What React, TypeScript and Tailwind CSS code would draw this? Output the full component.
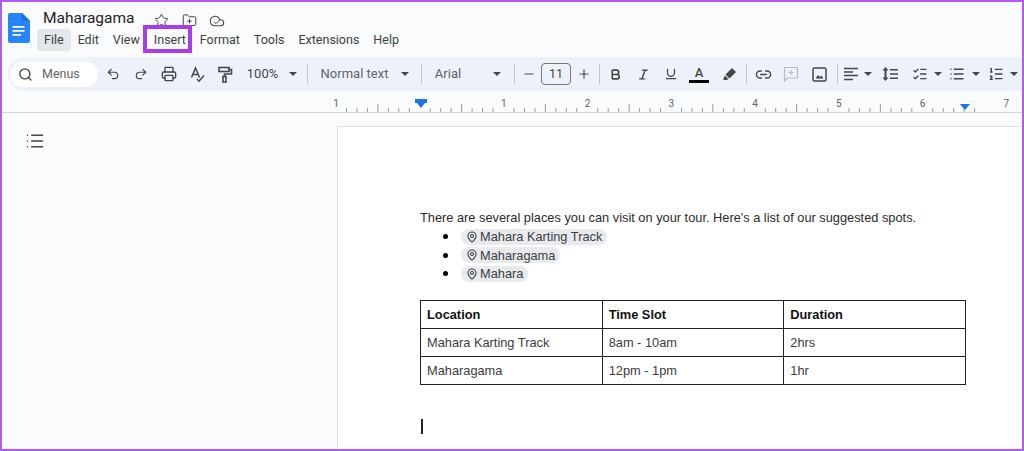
import { Bold, Cloud, Check, FolderPlus, Italic, Link2, List, ListChecks, ListOrdered, MapPin, Minus, Plus, Printer, Redo2, Search, Star, Underline, Undo2 } from 'lucide-react';

const menus = [
  { label: 'File', active: true },
  { label: 'Edit' },
  { label: 'View' },
  { label: 'Insert' },
  { label: 'Format' },
  { label: 'Tools' },
  { label: 'Extensions' },
  { label: 'Help' },
];

const rows = [
  ['Mahara Karting Track', '8am - 10am', '2hrs'],
  ['Maharagama', '12pm - 1pm', '1hr'],
];

const places = ['Mahara Karting Track', 'Maharagama', 'Mahara'];

const rulerLabels = [
  { n: 1, x: 334 },
  { n: 1, x: 501.75 },
  { n: 2, x: 585.5 },
  { n: 3, x: 669.25 },
  { n: 4, x: 753 },
  { n: 5, x: 836.75 },
  { n: 6, x: 920.5 },
  { n: 7, x: 1004.25 },
];

function Caret() {
  return <span className="h-0 w-0 border-x-[4px] border-t-[4px] border-x-transparent border-t-[#444746]" />;
}

function Sep() {
  return <span className="h-[20px] w-px shrink-0 bg-[#c7c7c7]" />;
}

function Slot({ className, children }: { className: string; children?: React.ReactNode }) {
  return <div className={`flex h-full shrink-0 items-center justify-center ${className}`}>{children}</div>;
}

function Ruler() {
  const eighth = 83.75 / 8;
  const ticks = Array.from({ length: 62 }, (_, i) => i);
  return (
    <svg width="1020" height="20" className="block">
      {ticks.map((i) => {
        const x = 334 + i * eighth;
        if (i % 8 === 0) return null;
        return <line key={i} x1={x} x2={x} y1={i % 4 === 0 ? 12 : 16} y2={20} stroke="#9a9c9e" strokeWidth="1" />;
      })}
      {rulerLabels.map((l) => (
        <text key={l.x} x={l.x} y="15" textAnchor="middle" fontSize="10" fontFamily="Roboto, sans-serif" fill="#5f6368">
          {l.n}
        </text>
      ))}
      <polygon points="413,7 425,7 425,11 423,11 419,16 415,11 413,11" fill="#1a73e8" />
      <polygon points="958,12 968,12 963,18" fill="#1a73e8" />
    </svg>
  );
}

function SpellIcon() {
  return (
    <svg width="17" height="17" viewBox="0 0 17 17" fill="none" stroke="#444746" strokeWidth="1.5">
      <path d="M2.5 11.5 6.5 2l4 9.5M4 8.5h5" />
      <path d="M8 13l2 2.2 5-5.7" />
    </svg>
  );
}

function PaintIcon() {
  return (
    <svg width="16" height="17" viewBox="0 0 16 17" fill="none" stroke="#444746" strokeWidth="1.6">
      <rect x="2" y="1.5" width="10" height="4" />
      <path d="M12 3.5h2.5v4.5H7.5v2.5" />
      <rect x="6" y="10.5" width="3" height="5.5" />
    </svg>
  );
}

function PenIcon() {
  return (
    <svg width="15" height="15" viewBox="0 0 15 15" fill="#444746">
      <path d="M10 1l4 4-6.5 6.5-4-4zM3 8.5l3.5 3.5-2 1H1.5v-1.5z" />
    </svg>
  );
}

function CommentIcon() {
  return (
    <svg width="16" height="16" viewBox="0 0 16 16" fill="none" stroke="#b8bbbf" strokeWidth="1.2">
      <path d="M1.5 1.5h13v10.5h-10l-3 3z" />
      <path d="M8 4v5M5.5 6.5h5" />
    </svg>
  );
}

function PictureIcon() {
  return (
    <svg width="15" height="15" viewBox="0 0 15 15" fill="none" stroke="#444746" strokeWidth="1.5">
      <rect x="1" y="1" width="13" height="13" rx="1.5" />
      <path d="M3.5 11.5l2.5-3.5 2 2 1.5-1.5 2 3z" fill="#444746" stroke="none" />
    </svg>
  );
}

function AlignIcon() {
  return (
    <svg width="14" height="14" viewBox="0 0 14 14" stroke="#444746" strokeWidth="1.5">
      <path d="M0 1.5h14M0 5h9M0 8.5h14M0 12.5h9" />
    </svg>
  );
}

function SpacingIcon() {
  return (
    <svg width="16" height="14" viewBox="0 0 16 14" fill="#444746">
      <path d="M3.5 0l3 3.5h-2v7h2l-3 3.5-3-3.5h2v-7h-2z" />
      <path d="M8 2h8v1.5H8zM8 6.2h8v1.5H8zM8 10.5h8V12H8z" />
    </svg>
  );
}

export default function App() {
  return (
    <div className="relative flex h-[451px] w-[1024px] flex-col overflow-hidden border-2 border-[#b05cf0] bg-[#f9fbfd] font-['Roboto',sans-serif] text-[#444746]">
      {/* Title + menus */}
      <div className="flex h-[55px] shrink-0">
        <svg width="22" height="30" viewBox="0 0 22 30" className="ml-[6px] mt-[11px] shrink-0">
          <path d="M2 0h12l8 8v20a2 2 0 0 1-2 2H2a2 2 0 0 1-2-2V2a2 2 0 0 1 2-2z" fill="#2684fc" />
          <path d="M14 0l8 8h-8z" fill="#1f6fe0" />
          <path d="M4.5 13h12v1.8h-12zM4.5 17h12v1.8h-12zM4.5 21h8.5v1.8H4.5z" fill="#fff" />
        </svg>
        <div className="ml-[7px] flex flex-col">
          <div className="flex h-[27px] items-end">
            <span className="mb-[1px] ml-[6px] text-[15.5px] leading-[20px] text-[#1f1f1f]">Maharagama</span>
            <Star className="mb-[1px] ml-[20px] h-[15px] w-[15px]" strokeWidth={1.6} />
            <FolderPlus className="mb-[1px] ml-[13px] h-[15px] w-[15px]" strokeWidth={1.6} />
            <span className="relative mb-[1px] ml-[12px] h-[15px] w-[16px]">
              <Cloud className="h-[16px] w-[16px]" strokeWidth={1.6} />
              <Check className="absolute left-[4px] top-[5px] h-[8px] w-[8px]" strokeWidth={3} />
            </span>
          </div>
          <div className="flex h-[22px] items-center text-[12.5px] text-[#3c4043]">
            {menus.map((m) => (
              <span
                key={m.label}
                className={`flex h-[22px] items-center rounded px-[7px] ${m.active ? 'bg-[#e4e7ea]' : ''}`}
              >
                {m.label}
              </span>
            ))}
          </div>
        </div>
      </div>

      {/* Toolbar */}
      <div className="ml-[6px] flex h-[34px] shrink-0 items-center rounded-l-full bg-[#edf2fa] pl-[2px]">
        <div className="flex h-[25px] w-[88px] shrink-0 items-center rounded-full bg-white pl-[8px] text-[12.5px] text-[#5f6368]">
          <Search className="h-[15px] w-[15px] text-[#444746]" strokeWidth={2.2} />
          <span className="ml-[9px]">Menus</span>
        </div>
        <Slot className="ml-px w-[28px]"><Undo2 className="h-[14px] w-[14px]" /></Slot>
        <Slot className="w-[28px]"><Redo2 className="h-[14px] w-[14px]" /></Slot>
        <Slot className="w-[28px]"><Printer className="h-[16px] w-[16px]" /></Slot>
        <Slot className="w-[28px]"><SpellIcon /></Slot>
        <Slot className="w-[28px]"><PaintIcon /></Slot>
        <Slot className="w-[47px] text-[13px]">100%</Slot>
        <Slot className="w-[14px]"><Caret /></Slot>
        <Slot className="w-[14px]"><Sep /></Slot>
        <Slot className="w-[81px] text-[13px] text-[#5f6368]">Normal text</Slot>
        <Slot className="w-[20px]"><Caret /></Slot>
        <Slot className="w-[12px]"><Sep /></Slot>
        <Slot className="w-[42px] text-[13px] text-[#5f6368]">Arial</Slot>
        <Slot className="ml-[20px] w-[16px]"><Caret /></Slot>
        <Slot className="w-[18px]"><Sep /></Slot>
        <Slot className="mr-[6px] w-[12px]"><Minus className="h-[14px] w-[14px] shrink-0" /></Slot>
        <div className="flex h-[22px] w-[30px] shrink-0 items-center justify-center rounded border border-[#747775] text-[12.5px]">11</div>
        <Slot className="w-[26px]"><Plus className="h-[14px] w-[14px]" /></Slot>
        <Slot className="w-[4px]"><Sep /></Slot>
        <Slot className="w-[28px]"><Bold className="h-[13px] w-[13px]" strokeWidth={3} /></Slot>
        <Slot className="w-[28px]"><Italic className="h-[13px] w-[13px]" strokeWidth={2.6} /></Slot>
        <Slot className="w-[28px]"><Underline className="h-[14px] w-[14px]" strokeWidth={2.2} /></Slot>
        <Slot className="w-[28px]">
          <div className="flex flex-col items-center">
            <span className="text-[13px] font-medium leading-[13px]">A</span>
            <span className="mt-px h-[3px] w-[20px] bg-black" />
          </div>
        </Slot>
        <Slot className="w-[32px]"><PenIcon /></Slot>
        <Slot className="w-[2px]"><Sep /></Slot>
        <Slot className="ml-[2px] w-[28px]"><Link2 className="h-[17px] w-[17px]" /></Slot>
        <Slot className="w-[28px]"><CommentIcon /></Slot>
        <Slot className="w-[28px]"><PictureIcon /></Slot>
        <Slot className="w-[8px]"><Sep /></Slot>
        <Slot className="w-[20px]"><AlignIcon /></Slot>
        <Slot className="ml-[2px] w-[10px]"><Caret /></Slot>
        <Slot className="ml-[4px] w-[26px]"><SpacingIcon /></Slot>
        <Slot className="ml-[4px] w-[26px]"><ListChecks className="h-[16px] w-[16px]" /></Slot>
        <Slot className="w-[10px]"><Caret /></Slot>
        <Slot className="ml-px w-[26px]"><List className="h-[16px] w-[16px]" strokeWidth={2.2} /></Slot>
        <Slot className="ml-px w-[10px]"><Caret /></Slot>
        <Slot className="ml-[2px] w-[26px]"><ListOrdered className="h-[16px] w-[16px]" /></Slot>
        <Slot className="w-[10px]"><Caret /></Slot>
      </div>

      {/* Ruler */}
      <div className="mt-[1px] h-[21px] shrink-0 border-b border-[#d5d7da]">
        <Ruler />
      </div>

      {/* Document area */}
      <div className="flex min-h-0 flex-1 pt-[13px]">
        <div className="w-[335px] shrink-0 pl-[23px] pt-[5px]">
          <List className="h-[20px] w-[20px]" strokeWidth={1.8} />
        </div>
        <div className="flex-1 border-l border-t border-[#dfe1e5] bg-white pl-[82px] pt-[82px] font-['Liberation_Sans',sans-serif] text-[12.8px] text-[#2b2b2b]">
          <p className="h-[18px] leading-[18px]">
            There are several places you can visit on your tour. Here's a list of our suggested spots.
          </p>
          <ul className="mt-[0.5px] flex flex-col">
            {places.map((p) => (
              <li key={p} className="flex h-[18.5px] items-center">
                <span className="ml-[23px] h-[5px] w-[5px] rounded-full bg-black" />
                <span className="ml-[13px] flex h-[16px] items-center rounded-full bg-[#e8eaed] px-[5px] text-[#3c4043]">
                  <MapPin className="mr-[2px] h-[12px] w-[12px]" strokeWidth={2.2} />
                  {p}
                </span>
              </li>
            ))}
          </ul>
          <table className="mt-[17px] w-[546px] table-fixed border-collapse">
            <thead>
              <tr className="h-[28px]">
                {['Location', 'Time Slot', 'Duration'].map((h) => (
                  <th key={h} className="border border-[#222] px-[6px] text-left font-bold text-[#111]">{h}</th>
                ))}
              </tr>
            </thead>
            <tbody>
              {rows.map((r) => (
                <tr key={r[0]} className="h-[28px]">
                  {r.map((c) => (
                    <td key={c} className="border border-[#222] px-[6px] text-[#3c3c3c]">{c}</td>
                  ))}
                </tr>
              ))}
            </tbody>
          </table>
          <div className="ml-px mt-[34px] h-[15px] w-[2px] bg-[#222]" />
        </div>
      </div>

      {/* Highlight round Insert */}
      <div className="absolute left-[141px] top-[23px] h-[28px] w-[49px] border-4 border-[#a63ded]" />
    </div>
  );
}
